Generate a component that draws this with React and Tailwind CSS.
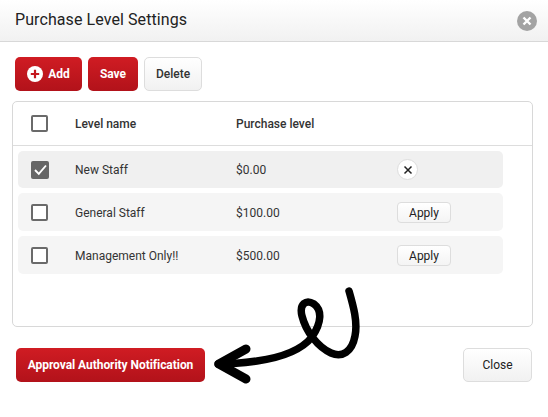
import React from "react";

const font = { fontFamily: "Roboto, sans-serif" };

function Box({ checked }) {
  return checked ? (
    <span className="flex h-[18px] w-[18px] items-center justify-center rounded-[2px] bg-[#666666]">
      <svg width="15" height="15" viewBox="0 0 15 15" fill="none">
        <path d="M2 8 L5.8 11.8 L13 3.5" stroke="#fff" strokeWidth="1.9" />
      </svg>
    </span>
  ) : (
    <span className="block h-[17px] w-[17px] rounded-[2px] border-2 border-[#6a6a6a] bg-white" />
  );
}

function RedBtn({ className, children }) {
  return (
    <button className={"flex h-[34px] items-center justify-center rounded-[5px] bg-gradient-to-b from-[#d01c23] to-[#b2121a] text-[12px] font-bold text-white " + className}>
      {children}
    </button>
  );
}

function Row({ name, price, checked, h, mt }) {
  return (
    <div className={"flex items-center rounded-[5px] " + h + " " + mt + " " + (checked ? "bg-[#f0f0f0]" : "bg-[#f5f5f5]")}>
      <div className="flex w-[57px] pl-[13px]"><Box checked={checked} /></div>
      <div className="w-[161px] pt-px text-[12px] text-[#333333]">{name}</div>
      <div className="w-[161px] pt-px text-[12px] text-[#333333]">{price}</div>
      {checked ? (
        <button className="flex h-[21px] w-[21px] items-center justify-center rounded-full border border-[#dddddd] bg-white">
          <svg width="10" height="10" viewBox="0 0 10 10"><path d="M1.5 1.5 L8.5 8.5 M8.5 1.5 L1.5 8.5" stroke="#222" strokeWidth="1.5" /></svg>
        </button>
      ) : (
        <button className="h-[21px] w-[54px] rounded-[4px] border border-[#dddddd] bg-gradient-to-b from-white to-[#f4f4f4] pt-px text-[12px] text-[#222222]">Apply</button>
      )}
    </div>
  );
}

export default function App() {
  return (
    <div style={font} className="relative h-[417px] w-[548px] overflow-hidden bg-white">
      <header className="flex h-[42px] items-center justify-between border-b border-[#d8d8d8] bg-gradient-to-b from-white to-[#f1f1f1] pl-[15px] pr-[11px]">
        <h1 className="pb-px text-[16px] font-normal tracking-[0.08px] text-[#222222]">Purchase Level Settings</h1>
        <span className="flex h-5 w-5 items-center justify-center rounded-full bg-[#a3a3a3]">
          <svg width="10" height="10" viewBox="0 0 10 10"><path d="M1.5 1.5 L8.5 8.5 M8.5 1.5 L1.5 8.5" stroke="#fff" strokeWidth="2.4" /></svg>
        </span>
      </header>

      <div className="flex gap-[6px] pl-[15px] pt-[15px]">
        <RedBtn className="w-[67px] gap-[5px]">
          <svg width="16" height="16" viewBox="0 0 16 16"><circle cx="8" cy="8" r="8" fill="#fff" /><path d="M8 3.8 V12.2 M3.8 8 H12.2" stroke="#c4161e" strokeWidth="2.2" /></svg>
          Add
        </RedBtn>
        <RedBtn className="w-[50px]">Save</RedBtn>
        <button className="h-[34px] w-[58px] rounded-[5px] border border-[#dddddd] bg-gradient-to-b from-white to-[#f1f1f1] text-[12px] font-medium text-[#333333]">Delete</button>
      </div>

      <section className="ml-3 mt-[10px] h-[226px] w-[521px] rounded-[5px] border border-[#d8d8d8]">
        <div className="flex h-[44px] items-center border-b border-[#dddddd] text-[12px] font-medium text-[#333333]">
          <div className="w-[62px] pl-[18px]"><Box /></div>
          <div className="w-[161px] pt-px">Level name</div>
          <div className="pt-px">Purchase level</div>
        </div>
        <div className="w-[490px] pl-[5px] pt-[5px]">
          <Row name="New Staff" price="$0.00" checked h="h-[37px]" mt="" />
          <Row name="General Staff" price="$100.00" h="h-[38px]" mt="mt-[5px]" />
          <Row name="Management Only!!" price="$500.00" h="h-[38px]" mt="mt-[5px]" />
        </div>
      </section>

      <div className="flex justify-between px-4 pt-[21px]">
        <RedBtn className="w-[189px] tracking-[-0.05px]">Approval Authority Notification</RedBtn>
        <button className="h-[34px] w-[69px] rounded-[5px] border border-[#dddddd] bg-gradient-to-b from-white to-[#f1f1f1] text-[12px] text-[#222222]">Close</button>
      </div>

      <svg className="absolute left-0 top-0" width="548" height="417" viewBox="0 0 548 417" fill="none">
        <path d="M349 291 C353 305 358 322 355 336 C352 352 342 358 331 353 C318 347 306 332 302 316 C299 304 306 299 314 304 C322 310 322 322 312 337 C300 352 278 358 257 361 C243 363 230 364 218 364" stroke="#000" strokeWidth="7.5" strokeLinecap="round" />
        <path d="M246 349 L219 364 L246 379" stroke="#000" strokeWidth="9" strokeLinecap="round" strokeLinejoin="round" />
      </svg>
    </div>
  );
}
